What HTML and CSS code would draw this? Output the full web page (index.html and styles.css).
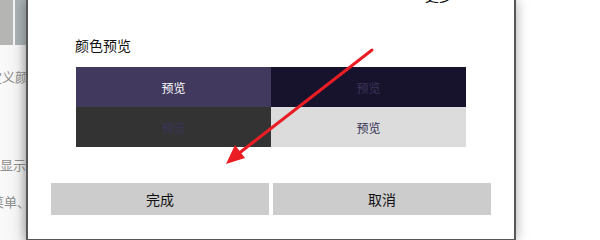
FILE: index.html
```html
<!DOCTYPE html>
<html lang="zh-CN">
<head>
	<meta charset="UTF-8">
	<title>颜色预览</title>
	<link rel="stylesheet" href="styles.css">
</head>
<body>
	<div class="screen">
		<div class="side">
			<div class="side_top">
				<span class="blk1"></span>
				<span class="blk2"></span>
			</div>
			<div class="side_line line1"><span>自定义颜</span></div>
			<div class="side_line line2"><span>显示</span></div>
			<div class="side_line line3"><span>菜单、</span></div>
		</div>
		<div class="dialog">
			<div class="more">更多 ›</div>
			<p class="title">颜色预览</p>
			<div class="preview">
				<span class="cell c1">预览</span>
				<span class="cell c2">预览</span>
				<span class="cell c3">预览</span>
				<span class="cell c4">预览</span>
			</div>
			<div class="btns">
				<button class="btn">完成</button>
				<button class="btn">取消</button>
			</div>
		</div>
	</div>
	<svg class="arrow" width="600" height="240" viewBox="0 0 600 240">
		<line x1="372" y1="50" x2="238" y2="154" stroke="#ea1d25" stroke-width="3" stroke-linecap="round"/>
		<polygon points="226,164 245,158 235,145" fill="#ea1d25"/>
	</svg>
</body>
</html>
```

FILE: styles.css
```css
	body{
		margin: 0;
		background: #fff;
		font-family: "Noto Sans CJK SC", "Microsoft YaHei", sans-serif;
	}
	.screen{
		display: flex;
		width: 600px;
		height: 240px;
		overflow: hidden;
	}
	.side{
		width: 26px;
		flex-shrink: 0;
		height: 240px;
		overflow: hidden;
		background: linear-gradient(to right, #fafafa, #f4f4f4 70%, #e2e2e2);
	}
	.side_top{
		display: flex;
		gap: 2px;
		height: 45px;
	}
	.blk1{
		width: 13px;
		background: #b5b5b3;
	}
	.blk2{
		width: 11px;
		background: #a9b1b4;
	}
	.side_line{
		display: flex;
		justify-content: flex-end;
		white-space: nowrap;
		font-size: 13px;
		line-height: 16px;
		color: #8c8c8c;
	}
	.line1{
		margin-top: 24px;
		margin-right: -2px;
	}
	.line2{
		margin-top: 72px;
		justify-content: flex-start;
	}
	.line3{
		margin-top: 21px;
		margin-right: -4px;
	}
	.dialog{
		width: 490px;
		height: 240px;
		flex-shrink: 0;
		box-sizing: border-box;
		padding: 0 23px;
		border: 2px solid #575757;
		border-top: none;
		border-bottom-width: 1px;
		background: #fff;
		box-shadow: 0 0 12px rgba(0,0,0,0.35);
		position: relative;
	}
	.more{
		margin-top: -14px;
		height: 18px;
		line-height: 18px;
		font-size: 14px;
		text-align: right;
		padding-right: 31px;
		color: #111;
	}
	.title{
		margin: 31px 0 0 24px;
		font-size: 14px;
		line-height: 20px;
		color: #111;
	}
	.preview{
		display: grid;
		grid-template-columns: 195px 195px;
		grid-auto-rows: 40px;
		margin: 12px 0 0 25px;
	}
	.cell{
		display: flex;
		align-items: center;
		justify-content: center;
		font-size: 12px;
	}
	.c1{
		background: #413a5e;
		color: #fff;
	}
	.c2{
		background: #18132d;
		color: #3b3459;
	}
	.c3{
		background: #333333;
		color: #3b3459;
	}
	.c4{
		background: #dcdcdc;
		color: #332e52;
	}
	.btns{
		display: flex;
		gap: 4px;
		margin-top: 36px;
	}
	.btn{
		flex: 1;
		height: 32px;
		border: none;
		background: #cccccc;
		font-family: inherit;
		font-size: 14px;
		color: #111;
		padding: 0;
	}
	.arrow{
		position: absolute;
		left: 0;
		top: 0;
	}
```
